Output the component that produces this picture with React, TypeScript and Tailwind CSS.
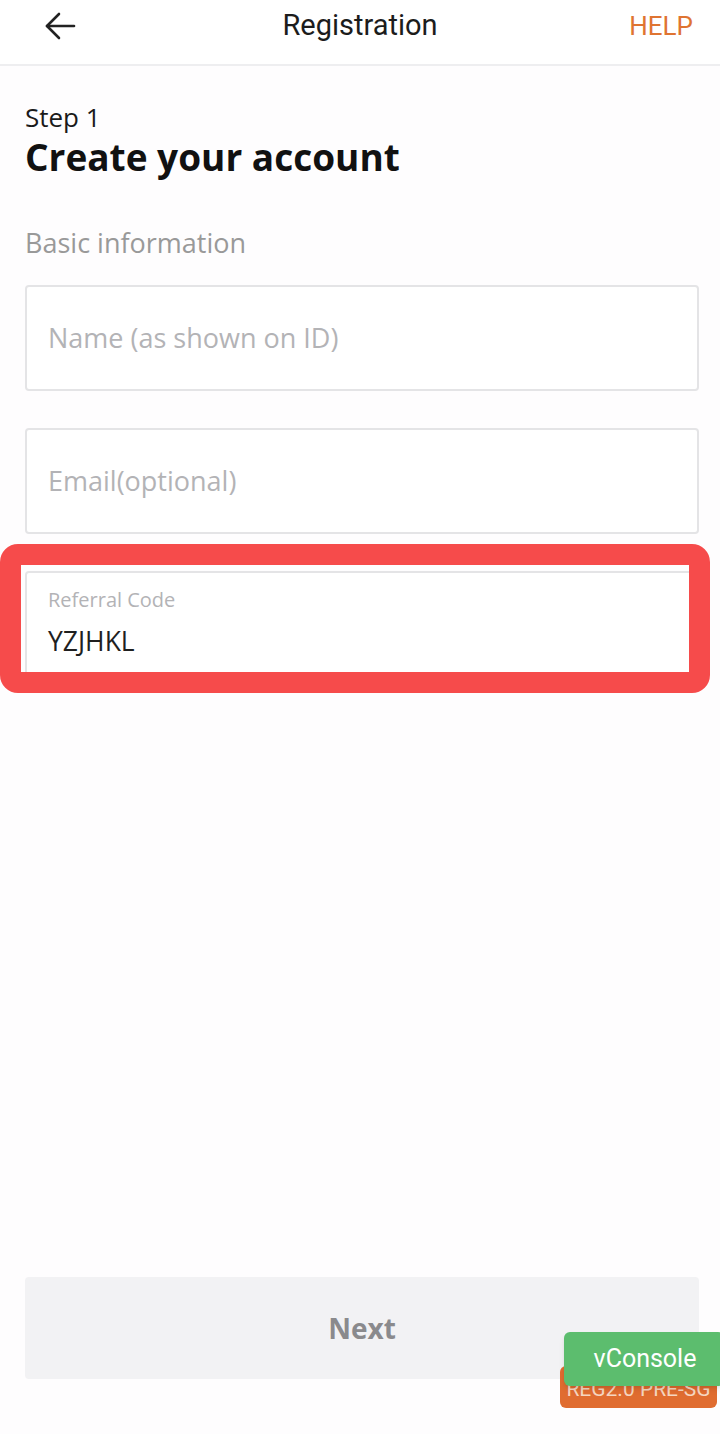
import React from "react";

function BackArrow() {
  return (
    <svg width="32" height="28" viewBox="0 0 32 28" fill="none" stroke="#222" strokeWidth="2.6" strokeLinecap="round" strokeLinejoin="round">
      <path d="M30 14H3" />
      <path d="M15 2L3 14l12 12" />
    </svg>
  );
}

function Field({ placeholder }: { placeholder: string }) {
  return (
    <div className="h-[106px] w-full border-2 border-[#e4e4e6] rounded-[4px] bg-white flex items-center px-[21px]">
      <span className="text-[27px] text-[#b3b3b6]">{placeholder}</span>
    </div>
  );
}

export default function App() {
  return (
    <div
      className="w-full min-h-screen bg-[#fefdfe] flex flex-col relative"
      style={{ fontFamily: '"Open Sans", "Noto Sans", sans-serif' }}
    >
      {/* header */}
      <div className="h-[66px] border-b-2 border-[#eeeef0] bg-white">
        <div className="h-[52px] flex items-center justify-between pl-[44px] pr-[27px] relative">
          <BackArrow />
          <div
            className="absolute left-0 right-0 text-center text-[29px] text-[#1c1c1c] pointer-events-none"
            style={{ fontFamily: "Roboto, sans-serif" }}
          >
            Registration
          </div>
          <span className="text-[26px] text-[#df7431]" style={{ fontFamily: "Roboto, sans-serif" }}>
            HELP
          </span>
        </div>
      </div>

      <div className="pl-[25px] pr-[21px] pt-[36px] flex flex-col">
        <div className="text-[26px] leading-[30px] text-[#1a1a1a]">Step 1</div>
        <div className="mt-[5px] text-[37px] leading-[40px] font-bold text-[#111]">Create your account</div>
        <div className="mt-[48px] text-[27px] leading-[36px] text-[#999]">Basic information</div>

        <div className="mt-[24px] flex flex-col gap-[37px]">
          <Field placeholder="Name (as shown on ID)" />
          <Field placeholder="Email(optional)" />
          <div className="relative">
            <div className="h-[106px] w-full border-2 border-[#e4e4e6] rounded-[4px] bg-white flex flex-col pt-[14px] px-[21px]">
              <span className="text-[20px] leading-[26px] text-[#b3b3b6]">Referral Code</span>
              <span className="mt-[12px] text-[26.5px] leading-[32px] text-[#1f1f1f]">YZJHKL</span>
            </div>
            <div className="absolute left-[-25px] top-[-27px] w-[710px] h-[149px] border-[21px] border-[#f64b4b] rounded-[18px] pointer-events-none" />
          </div>
        </div>
      </div>

      <div className="flex-1" />

      <div className="pl-[25px] pr-[21px] pb-[55px]">
        <div className="h-[102px] w-full rounded-[4px] bg-[#f2f2f4] flex items-center justify-center">
          <span className="text-[28px] font-bold text-[#8a8a8d]">Next</span>
        </div>
      </div>

      {/* debug badges */}
      <div
        className="absolute left-[560px] top-[1366px] w-[157px] h-[42px] rounded-[6px] bg-[#e06c30] flex items-end justify-center pb-[3px] text-[21px] text-[#f6d6c0]"
        style={{ fontFamily: "Roboto, sans-serif" }}
      >
        REG2.0 PRE-SG
      </div>
      <div
        className="absolute left-[564px] top-[1332px] w-[160px] h-[54px] rounded-[6px] bg-[#5cbd6e] shadow-md flex items-center justify-center pl-[2px] text-[25px] text-white"
        style={{ fontFamily: "Roboto, sans-serif" }}
      >
        vConsole
      </div>
    </div>
  );
}
